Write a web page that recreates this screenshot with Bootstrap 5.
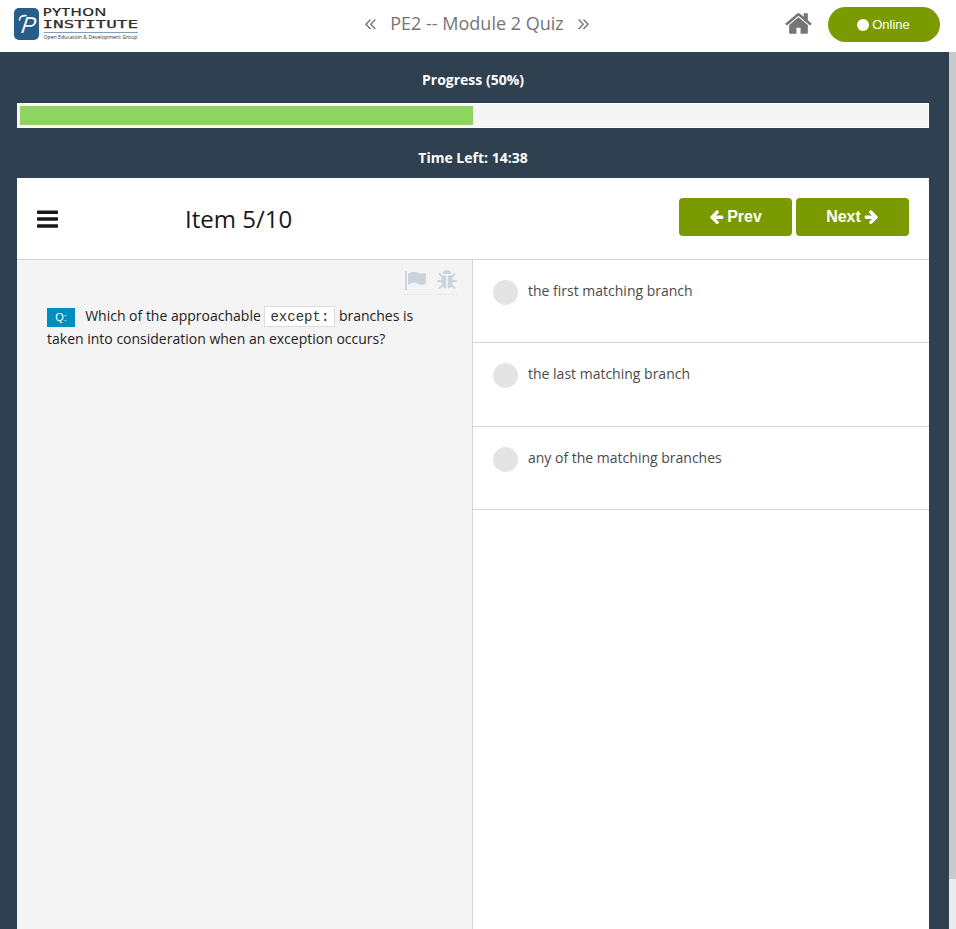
<!DOCTYPE html>
<html lang="en">
<head>
<meta charset="utf-8">
<meta name="viewport" content="width=device-width, initial-scale=1">
<title>PE2 -- Module 2 Quiz</title>
<link href="https://cdn.jsdelivr.net/npm/bootstrap@5.3.0/dist/css/bootstrap.min.css" rel="stylesheet">
<style>
  body { font-family: "Open Sans", sans-serif; font-size: 14px; line-height: 23px; color: #222; overflow: hidden; }
  svg { display: block; flex: none; }
  .topbar { height: 52px; padding: 0 16px 0 14px; }
  .side { flex: 1 1 0; }
  .logo { margin-bottom: 4px; overflow: visible; }
  .quiz-title { font-size: 18px; color: #757575; gap: 14px; padding-bottom: 5px; }
  .home { margin: 0 15px 6px 0; }
  .btn-online { width: 112px; height: 35px; background: #7b9a00; color: #fff; font: 13px "Liberation Sans", sans-serif; gap: 3px; padding: 0 1px 0 0; margin-bottom: 3px; }
  .dot { width: 12px; height: 12px; background: #fff; }
  .stage { height: 877px; background: #2f4050; }
  .stage-main { padding: 0 20px 0 17px; }
  .strip { color: #fff; font-weight: 700; height: 51px; padding-top: 16px; }
  .strip.time { height: 50px; padding-top: 18px; }
  .meter { height: 25px; border-radius: 0; background: #f5f5f5; border: 1px solid #fff; padding: 2px; }
  .meter .progress-bar { background: #8ed45f; }
  .scroll-track { width: 7px; background: #ebebeb; }
  .scroll-thumb { height: 827px; background: #cacaca; }
  .item-head { height: 82px; border-bottom: 1px solid #d3d3d3; padding: 0 20px; }
  .item-title { font-size: 24px; line-height: 30px; color: #1a1718; margin-left: 127px; }
  .btn-step { width: 113px; height: 38px; background: #7b9a00; color: #fff; border-radius: 4px; border: 0; font: bold 16px "Liberation Sans", sans-serif; gap: 3px; padding: 0; margin-bottom: 3px; }
  .question { width: 456px; background: #f4f4f4; border-right: 1px solid #d3d3d3; padding: 8px 15px 0 30px; }
  .question-text { padding-right: 15px; }
  .tools { gap: 5px; height: 36px; }
  .tool { border-bottom: 1px dotted #dcdfe2; height: 27px; }
  .q-tag { display: inline-block; width: 28px; height: 19px; background: #008ebf; color: #fff; font: 11px/19px "Liberation Sans", sans-serif; text-align: center; margin-right: 6.5px; }
  .q-code { font: 14px/18px "Liberation Mono", monospace; color: #333; background: #fff; border: 1px solid #ddd; padding: 2px 5px 1px; }
  .answer { height: 83.4px; border-bottom: 1px solid #d3d3d3; padding: 20px; gap: 10px; color: #4a4a4a; }
  .choice { width: 25px; height: 25px; background: #e4e4e4; }
  .answer span { line-height: 22px; }
</style>
<script src="https://cdn.jsdelivr.net/npm/bootstrap@5.3.0/dist/js/bootstrap.bundle.min.js"></script>
</head>
<body class="bg-white">
<header class="topbar d-flex align-items-center">
  <div class="side">
    <svg class="logo" width="126" height="34" viewBox="0 0 126 34" role="img" aria-label="Python Institute">
      <rect x="0" y="1" width="25" height="32" rx="5" fill="#265d8b"/>
      <text transform="translate(6.500 25.500) skewX(-9)" font-family="Liberation Sans, sans-serif" font-style="italic" font-size="23" textLength="14" lengthAdjust="spacingAndGlyphs" fill="#fff">P</text>
      <path d="M5.500 13Q5.500 8.300 12 8.700" fill="none" stroke="#fff" stroke-width="1.600" stroke-linecap="round"/>
      <g fill="#2f2f2f">
        <text x="28.500" y="9.300" font-family="Open Sans, sans-serif" font-size="11.300" font-weight="600" textLength="64" lengthAdjust="spacingAndGlyphs">PYTHON</text>
        <text x="28.500" y="21.200" font-family="DejaVu Sans Mono, monospace" font-size="11.300" stroke="#2f2f2f" stroke-width=".25" textLength="95.500" lengthAdjust="spacingAndGlyphs">INSTITUTE</text>
        <text x="29.500" y="31.600" font-family="Open Sans, sans-serif" font-size="5.300" textLength="94" lengthAdjust="spacingAndGlyphs">Open Education &amp; Development Group</text>
      </g>
      <rect x="30" y="25" width="94" height="1" fill="#7d9fbd"/>
    </svg>
  </div>
  <div class="quiz-title d-flex align-items-center">
    <svg width="11" height="12" viewBox="0 0 11 12" fill="none" stroke="#757575" stroke-width="1.400"><path d="M5.500 1.500L1 6.200L5.500 11M10.300 1.500L5.800 6.200L10.300 11"/></svg>
    <span>PE2 -- Module 2 Quiz</span>
    <svg width="11" height="12" viewBox="0 0 11 12" fill="none" stroke="#757575" stroke-width="1.400"><path d="M.7 1.500L5.200 6.200L.7 11M5.500 1.500L10 6.200L5.500 11"/></svg>
  </div>
  <div class="side d-flex justify-content-end align-items-center">
    <svg class="home" width="29" height="29" viewBox="0 0 1792 1792" fill="#757575"><path d="M1472 992v480q0 26-19 45t-45 19h-384v-384h-256v384h-384q-26 0-45-19t-19-45v-480q0-1 .5-3t.5-3l575-474 575 474q1 2 1 6zm223-69l-62 74q-8 9-21 11h-3q-13 0-21-7l-692-577-692 577q-12 8-24 7-13-2-21-11l-62-74q-8-10-7-23.500t11-21.500l719-599q32-26 76-26t76 26l244 204v-195q0-14 9-23t23-9h192q14 0 23 9t9 23v408l219 182q10 8 11 21.500t-7 23.500z"/></svg>
    <button class="btn btn-online rounded-pill border-0 d-flex align-items-center justify-content-center"><i class="dot rounded-circle"></i>Online</button>
  </div>
</header>
<div class="stage d-flex">
  <main class="stage-main flex-grow-1 d-flex flex-column">
    <div class="strip text-center">Progress (50%)</div>
    <div class="progress meter"><div class="progress-bar" role="progressbar" style="width:50%"></div></div>
    <div class="strip time text-center">Time Left: 14:38</div>
    <section class="bg-white flex-grow-1 d-flex flex-column">
      <div class="item-head d-flex align-items-center">
        <svg width="21" height="18" viewBox="0 0 21 18" fill="#1a1718"><rect y="0.500" width="21" height="3.500" rx=".8"/><rect y="7.300" width="21" height="3.500" rx=".8"/><rect y="14.200" width="21" height="3.500" rx=".8"/></svg>
        <div class="item-title">Item 5/10</div>
        <div class="ms-auto d-flex gap-1">
          <button class="btn btn-step d-flex align-items-center justify-content-center"><svg width="15" height="16" viewBox="64 0 1680 1792" fill="#fff"><path d="M1664 896v128q0 53-32.500 90.500t-84.500 37.500h-704l293 294q38 36 38 90t-38 90l-75 76q-37 37-90 37-52 0-91-37l-651-652q-37-37-37-90 0-52 37-91l651-650q38-38 91-38 52 0 90 38l75 74q38 38 38 91t-38 91l-293 293h704q52 0 84.500 37.500t32.500 90.500z" transform="translate(0 -40)"/></svg>Prev</button>
          <button class="btn btn-step d-flex align-items-center justify-content-center">Next<svg width="15" height="16" viewBox="64 0 1680 1792" fill="#fff"><path d="M1664 896v128q0 53-32.500 90.500t-84.500 37.500h-704l293 294q38 36 38 90t-38 90l-75 76q-37 37-90 37-52 0-91-37l-651-652q-37-37-37-90 0-52 37-91l651-650q38-38 91-38 52 0 90 38l75 74q38 38 38 91t-38 91l-293 293h704q52 0 84.500 37.500t32.500 90.500z" transform="translate(1808 -40) scale(-1 1)"/></svg></button>
        </div>
      </div>
      <div class="d-flex flex-grow-1">
        <div class="question">
          <div class="tools d-flex justify-content-end align-items-start">
            <span class="tool"><svg width="27" height="24" viewBox="0 0 27 24" fill="#cbd3dd"><rect x="0" y="3" width="2" height="19" rx=".5"/><path d="M3 5.500Q8 2.500 12 4.500T21 5V15.500Q17 18 12.500 15.500T3 17Z"/></svg></span>
            <span class="tool"><svg width="20" height="24" viewBox="0 0 20 24" fill="#cbd3dd"><path d="M5.700 6Q6 2 10 2T14.300 6Z"/><path d="M4.500 7.500H9.200V20.500Q4.500 20 4.500 14.500ZM15.500 7.500H10.800V20.500Q15.500 20 15.500 14.500Z"/><path d="M2 5.500L5 8.500M18 5.500L15 8.500M.5 13H5M15 13H19.500M2 20.500L6 17M18 20.500L14 17" fill="none" stroke="#cbd3dd" stroke-width="1.800"/></svg></span>
          </div>
          <div class="question-text"><span class="q-tag">Q:</span> Which of the approachable <code class="q-code">except:</code> branches is taken into consideration when an exception occurs?</div>
        </div>
        <div class="flex-grow-1">
          <label class="answer d-flex align-items-start"><i class="choice rounded-circle"></i><span>the first matching branch</span></label>
          <label class="answer d-flex align-items-start"><i class="choice rounded-circle"></i><span>the last matching branch</span></label>
          <label class="answer d-flex align-items-start"><i class="choice rounded-circle"></i><span>any of the matching branches</span></label>
        </div>
      </div>
    </section>
  </main>
  <div class="scroll-track"><div class="scroll-thumb"></div></div>
</div>
</body>
</html>
